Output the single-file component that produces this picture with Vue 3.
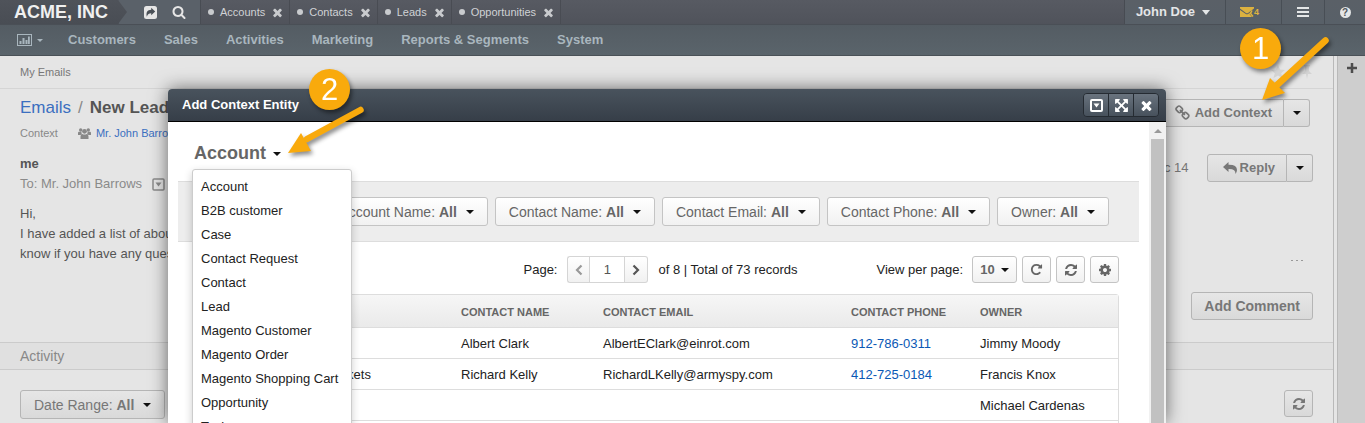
<script setup>
import { ref } from 'vue'

const tabs = ['Accounts', 'Contacts', 'Leads', 'Opportunities']
const nav = ['Customers', 'Sales', 'Activities', 'Marketing', 'Reports & Segments', 'System']
const entities = [
  'Account', 'B2B customer', 'Case', 'Contact Request', 'Contact', 'Lead',
  'Magento Customer', 'Magento Order', 'Magento Shopping Cart', 'Opportunity', 'Task'
]
const filters = ['Account Name', 'Contact Name', 'Contact Email', 'Contact Phone', 'Owner']
const rows = [
  { account: '', name: 'Albert Clark', email: 'AlbertEClark@einrot.com', phone: '912-786-0311', owner: 'Jimmy Moody' },
  { account: 'Supermarkets', name: 'Richard Kelly', email: 'RichardLKelly@armyspy.com', phone: '412-725-0184', owner: 'Francis Knox' },
  { account: '', name: '', email: '', phone: '', owner: 'Michael Cardenas' },
  { account: '', name: '', email: '', phone: '', owner: '' }
]
const page = ref('1')

const icons = {
  times: 'M1490 1322q0 40-28 68l-136 136q-28 28-68 28t-68-28l-294-294-294 294q-28 28-68 28t-68-28l-136-136q-28-28-28-68t28-68l294-294-294-294q-28-28-28-68t28-68l136-136q28-28 68-28t68 28l294 294 294-294q28-28 68-28t68 28l136 136q28 28 28 68t-28 68l-294 294 294 294q28 28 28 68z',
  search: 'M1216 832q0-185-131.5-316.5t-316.5-131.5-316.5 131.5-131.5 316.5 131.5 316.5 316.5 131.5 316.5-131.5 131.5-316.5zm512 832q0 52-38 90t-90 38q-54 0-90-38l-343-342q-179 124-399 124-143 0-273.5-55.5t-225-150-150-225-55.5-273.5 55.5-273.5 150-225 225-150 273.5-55.5 273.5 55.5 225 150 150 225 55.5 273.5q0 220-124 399l343 343q37 37 37 90z',
  link: 'M1456 1216q0-40-28-68l-208-208q-28-28-68-28-42 0-72 32 3 3 19 18.5t21.5 21.5 15 19 13 25.5 3.5 27.5q0 40-28 68t-68 28q-15 0-27.5-3.5t-25.5-13-19-15-21.5-21.5-18.5-19q-33 31-33 73 0 40 28 68l206 207q27 27 68 27 40 0 68-26l147-146q28-28 28-67zm-703-705q0-40-28-68l-206-207q-28-28-68-28-39 0-68 27l-147 146q-28 28-28 67 0 40 28 68l208 208q27 27 68 27 42 0 72-31-3-3-19-18.5t-21.5-21.5-15-19-13-25.5-3.5-27.5q0-40 28-68t68-28q15 0 27.5 3.5t25.5 13 19 15 21.5 21.5 18.5 19q33-31 33-73zm895 705q0 120-85 203l-147 146q-83 83-203 83-121 0-204-85l-206-207q-83-83-83-203 0-123 88-209l-88-88q-86 88-208 88-120 0-204-84l-208-208q-84-84-84-204t85-203l147-146q83-83 203-83 121 0 204 85l206 207q83 83 83 203 0 123-88 209l88 88q86-88 208-88 120 0 204 84l208 208q84 84 84 204z',
  refresh: 'M1639 1056q0 5-1 7-64 268-268 434.5t-478 166.5q-146 0-282.5-55t-243.5-157l-129 129q-19 19-45 19t-45-19-19-45v-448q0-26 19-45t45-19h448q26 0 45 19t19 45-19 45l-137 137q71 66 161 102t187 36q134 0 250-65t186-179q11-17 53-117 8-23 30-23h192q13 0 22.5 9.5t9.5 22.5zm25-800v448q0 26-19 45t-45 19h-448q-26 0-45-19t-19-45 19-45l138-138q-148-137-349-137-134 0-250 65t-186 179q-11 17-53 117-8 23-30 23h-199q-13 0-22.5-9.5t-9.5-22.5v-7q65-268 270-434.5t480-166.5q146 0 284 55.5t245 156.5l130-129q19-19 45-19t45 19 19 45z',
  repeat: 'M1664 256v448q0 26-19 45t-45 19h-448q-42 0-59-40-17-39 14-69l138-138q-148-137-349-137-104 0-198.5 40.5t-163.5 109.5-109.5 163.5-40.5 198.5 40.5 198.5 109.5 163.5 163.5 109.5 198.5 40.5q119 0 225-52t179-147q7-10 23-12 15 0 25 9l137 138q9 8 9.5 20.5t-7.5 22.5q-109 132-264 204.5t-327 72.5q-156 0-298-61t-245-164-164-245-61-298 61-298 164-245 245-164 298-61q147 0 284.5 55.5t244.5 156.5l130-129q29-31 70-14 39 17 39 59z',
  gear: 'M1152 896q0-106-75-181t-181-75-181 75-75 181 75 181 181 75 181-75 75-181zm512-109v222q0 12-8 23t-20 13l-185 28q-19 54-39 91 35 50 107 138 10 12 10 25t-9 23q-27 37-99 108t-94 71q-12 0-26-9l-138-108q-44 23-91 38-16 136-29 186-7 28-36 28h-222q-14 0-24.5-8.5t-11.5-21.5l-28-184q-49-16-90-37l-141 107q-10 9-25 9-14 0-25-11-126-114-165-168-7-10-7-23 0-12 8-23 15-21 51-66.5t54-70.5q-27-50-41-99l-183-27q-13-2-21-12.5t-8-23.5v-222q0-12 8-23t19-13l186-28q14-46 39-92-40-57-107-138-10-12-10-24 0-10 9-23 26-36 98.5-107.5t94.5-71.5q13 0 26 10l138 107q44-23 91-38 16-136 29-186 7-28 36-28h222q14 0 24.5 8.5t11.5 21.5l28 184q49 16 90 37l142-107q9-9 24-9 13 0 25 10 129 119 165 170 7 8 7 22 0 12-8 23-15 21-51 66.5t-54 70.5q26 50 41 98l183 28q13 2 21 12.5t8 23.5z',
  expand: 'M1411 541l-355 355 355 355 144-144q29-31 70-14 39 17 39 59v448q0 26-19 45t-45 19h-448q-42 0-59-40-17-39 14-69l144-144-355-355-355 355 144 144q31 30 14 69-17 40-59 40h-448q-26 0-45-19t-19-45v-448q0-42 40-59 39-17 69 14l144 144 355-355-355-355-144 144q-19 19-45 19-12 0-24-5-40-17-40-59v-448q0-26 19-45t45-19h448q42 0 59 40 17 39-14 69l-144 144 355 355 355-355-144-144q-31-30-14-69 17-40 59-40h448q26 0 45 19t19 45v448q0 42-39 59-13 5-25 5-26 0-45-19z'
}
</script>

<template>
  <div class="app">
    <header class="topbar">
      <a class="logo" href="#">ACME, INC</a>
      <div class="tools">
        <button class="bare" aria-label="Share">
          <svg width="13" height="13" viewBox="0 0 13 13">
            <rect x="0" y="0" width="13" height="13" rx="2.500" fill="currentColor" />
            <path d="M7.200 1.800v2C3.500 4 1.800 6 2.800 10.800 3.800 8.200 5 7.300 7.200 7.300v2l4-3.700z" fill="#4a5057" />
          </svg>
        </button>
        <button class="bare" aria-label="Search">
          <svg width="14" height="14" viewBox="0 0 1792 1792"><path :d="icons.search" fill="currentColor" /></svg>
        </button>
      </div>
      <div class="tabs">
        <div v-for="t in tabs" :key="t" class="tab">
          <i class="dot"></i><a href="#">{{ t }}</a>
          <button class="bare" :aria-label="'Close ' + t">
            <svg width="13" height="13" viewBox="0 0 1792 1792"><path :d="icons.times" fill="currentColor" /></svg>
          </button>
        </div>
      </div>
      <div class="user">
        <button class="bare name">John Doe <i class="caret big"></i></button>
        <button class="bare mail" aria-label="Mail">
          <svg width="19" height="12" viewBox="0 0 19 12">
            <path d="M0 2.500 6 7q1 .6 2 0l6-4.500V1H0z M0 4v7h12L9.500 8 11 5.800 8.500 7.800q-1.500 1-3 0z" fill="#dcb13f" />
            <path d="M12 4.500 10.500 7.500 13 10.500" fill="none" stroke="#dcb13f" stroke-width="1.500" />
          </svg><span>4</span>
        </button>
        <button class="bare menu" aria-label="Menu"><i></i><i></i><i></i></button>
        <button class="bare help" aria-label="Help"><span>?</span></button>
      </div>
    </header>

    <nav class="mainnav">
      <button class="bare dash" aria-label="Dashboards">
        <svg width="15" height="12" viewBox="0 0 15 12">
          <rect x=".5" y=".5" width="14" height="11" fill="none" stroke="currentColor" />
          <path d="M2.500 7h2v3h-2zM5.500 4h2v6h-2zM8.500 6h2v4h-2zM11 2.500h1.800V10H11z" fill="currentColor" />
        </svg>
        <i class="caret small"></i>
      </button>
      <a v-for="n in nav" :key="n" href="#">{{ n }}</a>
    </nav>

    <div class="page">
      <main class="main">
        <div class="crumbs">
          <span>My Emails</span>
          <span class="pins">
            <svg width="14" height="13" viewBox="0 0 14 13"><path d="M7 0l2 4.500 5 .5-3.800 3.200L11.500 13 7 10.500 2.500 13l1.300-4.800L0 5l5-.5z" fill="currentColor" /></svg>
            <svg width="12" height="14" viewBox="0 0 12 14"><path d="M3 0h6v1L8 2v4l3 3H7l-1 5-1-5H1l3-3V2L3 1z" fill="currentColor" /></svg>
          </span>
        </div>

        <div class="row head">
          <div>
            <h1><a href="#">Emails</a><span>/</span>New Lead</h1>
            <p class="context">
              <span>Context</span>
              <svg width="13" height="11" viewBox="0 0 13 11" fill="currentColor">
                <circle cx="2.700" cy="2" r="1.700" /><circle cx="10.300" cy="2" r="1.700" /><circle cx="6.500" cy="3.300" r="2.400" />
                <path d="M0 7V5q0-1.200 1-1.200h2.400Q3.300 5.500 4 6 2.800 6.300 2.500 7zM13 7V5q0-1.200-1-1.200H9.600Q9.700 5.500 9 6q1.200.3 1.500 1zM2.500 11V8.500q0-2.500 1.800-2.500 2.200 1.200 4.400 0 1.800 0 1.800 2.500V11z" />
              </svg>
              <a href="#">Mr. John Barrows</a>
            </p>
          </div>
          <div class="group context-group">
            <button class="btn bold"><svg width="16" height="16" viewBox="0 0 1792 1792"><path :d="icons.link" fill="currentColor" /></svg>Add Context</button>
            <button class="btn split" aria-label="More context actions"><i class="caret"></i></button>
          </div>
        </div>

        <div class="row message">
          <div>
            <strong>me</strong>
            <p class="to">To: Mr. John Barrows
              <svg width="13" height="13" viewBox="0 0 13 13"><rect x="1" y="1" width="11" height="11" rx="1" fill="none" stroke="currentColor" stroke-width="1.500" /><path d="M3.500 4.500h6l-3 4z" fill="currentColor" /></svg>
            </p>
          </div>
          <div class="reply">
            <time>Dec 14</time>
            <div class="group">
              <button class="btn bold"><svg width="14" height="12" viewBox="0 0 14 12"><path d="M5.500 0v2.700Q14 2.500 14 8q0 2-1.600 4Q13 6.800 5.500 7v3L0 5z" fill="currentColor" /></svg>Reply</button>
              <button class="btn split" aria-label="More reply actions"><i class="caret"></i></button>
            </div>
          </div>
        </div>

        <div class="row text">
          <p>Hi,<br>I have added a list of about<br>know if you have any questions</p>
          <span class="dots"><i></i><i></i><i></i></span>
        </div>

        <div class="row comment"><button class="btn large">Add Comment</button></div>
        <h2 class="activity">Activity</h2>
        <div class="row range">
          <button class="btn filter">Date Range: <b>All</b><i class="caret"></i></button>
          <button class="btn square" aria-label="Refresh"><svg width="14" height="14" viewBox="0 0 1792 1792"><path :d="icons.refresh" fill="currentColor" /></svg></button>
        </div>
      </main>
      <aside class="rail">
        <button class="bare" aria-label="Add widget"><svg width="10" height="10" viewBox="0 0 10 10"><path d="M5 0v10M0 5h10" stroke="currentColor" stroke-width="2.500" /></svg></button>
      </aside>
    </div>

    <section class="dialog" role="dialog" aria-label="Add Context Entity">
      <div class="dialog-head">
        <span>Add Context Entity</span>
        <div class="wins">
          <button aria-label="Minimize"><svg width="13" height="13" viewBox="0 0 13 13"><rect x="1" y="1" width="11" height="11" rx="1" fill="none" stroke="#fff" stroke-width="2" /><path d="M3.500 4.500h6l-3 4z" fill="#fff" /></svg></button>
          <button aria-label="Maximize"><svg width="15" height="15" viewBox="0 0 1792 1792"><path :d="icons.expand" fill="#fff" /></svg></button>
          <button aria-label="Close"><svg width="15" height="15" viewBox="0 0 1792 1792"><path :d="icons.times" fill="#fff" /></svg></button>
        </div>
      </div>
      <div class="dialog-body">
        <div class="content">
          <div class="picker">
            <button class="bare title">Account<i class="caret"></i></button>
            <ul class="options">
              <li v-for="e in entities" :key="e"><a href="#">{{ e }}</a></li>
            </ul>
          </div>
          <div class="filters">
            <button v-for="f in filters" :key="f" class="btn filter">{{ f }}: <b>All</b><i class="caret"></i></button>
          </div>
          <div class="paging">
            <div class="pager">
              <label for="page">Page:</label>
              <div class="group pages">
                <button class="btn off" aria-label="Previous page"><svg width="8" height="12" viewBox="0 0 8 12"><path d="M6.500 1.500 2 6l4.500 4.500" fill="none" stroke="currentColor" stroke-width="2.200" /></svg></button>
                <input id="page" v-model="page">
                <button class="btn" aria-label="Next page"><svg width="8" height="12" viewBox="0 0 8 12"><path d="M1.500 1.500 6 6l-4.500 4.500" fill="none" stroke="currentColor" stroke-width="2.200" /></svg></button>
              </div>
              <span>of 8 | Total of 73 records</span>
            </div>
            <div class="view">
              <span>View per page:</span>
              <button class="btn size">10<i class="caret"></i></button>
              <button class="btn square" aria-label="Reset"><svg width="13" height="13" viewBox="0 0 1792 1792"><path :d="icons.repeat" fill="currentColor" /></svg></button>
              <button class="btn square" aria-label="Refresh"><svg width="14" height="14" viewBox="0 0 1792 1792"><path :d="icons.refresh" fill="currentColor" /></svg></button>
              <button class="btn square" aria-label="Settings"><svg width="14" height="14" viewBox="0 0 1792 1792"><path :d="icons.gear" fill="currentColor" /></svg></button>
            </div>
          </div>
          <table>
            <colgroup><col class="c1"><col class="c2"><col class="c3"><col class="c4"><col></colgroup>
            <thead>
              <tr><th></th><th>CONTACT NAME</th><th>CONTACT EMAIL</th><th>CONTACT PHONE</th><th>OWNER</th></tr>
            </thead>
            <tbody>
              <tr v-for="(r, i) in rows" :key="i">
                <td class="account">{{ r.account }}</td><td>{{ r.name }}</td><td>{{ r.email }}</td>
                <td><a v-if="r.phone" href="#">{{ r.phone }}</a></td><td>{{ r.owner }}</td>
              </tr>
            </tbody>
          </table>
        </div>
        <div class="scroll"><i class="up"></i><div class="thumb"></div></div>
      </div>
    </section>

    <svg class="note two" width="100" height="110" viewBox="0 0 100 110">
      <circle cx="49.500" cy="29.500" r="20.500" fill="#f9aa0c" />
      <text x="49.500" y="40" text-anchor="middle">2</text>
      <path d="M80.500 50 27 79" stroke="#f9aa0c" stroke-width="6.500" stroke-linecap="round" />
      <path d="M8 93 21 73l10 18z" fill="#f9aa0c" />
    </svg>
    <svg class="note one" width="110" height="95" viewBox="0 0 110 95">
      <circle cx="30.500" cy="28.500" r="20.500" fill="#f9aa0c" />
      <text x="30.500" y="39" text-anchor="middle">1</text>
      <path d="M95.500 20.500 47 65" stroke="#f9aa0c" stroke-width="6.500" stroke-linecap="round" />
      <path d="M32 80 40 58l15 15z" fill="#f9aa0c" />
    </svg>
  </div>
</template>

<style>
body { margin: 0; overflow: hidden; }
</style>

<style scoped>
* { box-sizing: border-box; }
.app { position: relative; display: flex; flex-direction: column; height: 100vh; overflow: hidden; font: 13px/18px "Liberation Sans", Arial, sans-serif; color: #555; background: #e5e5e5; }
a { text-decoration: none; color: #3b6fc0; }
p, h1, h2, ul { margin: 0; padding: 0; }
svg { flex: none; display: block; }
button { font: inherit; color: inherit; margin: 0; white-space: nowrap; }
.bare { border: 0; background: none; padding: 0; display: flex; align-items: center; }
.caret { display: inline-block; flex: none; border: 4px solid transparent; border-top-color: #111; border-bottom: 0; }
.caret.big { border-width: 5px 4px 0; border-top-color: #e4e6e7; margin-left: 7px; }
.caret.small { border-width: 3px 3px 0; border-top-color: #a9b6be; margin-left: 5px; }

.topbar { display: flex; flex: none; height: 25px; background: linear-gradient(#575a62, #50535b); border-bottom: 1px solid #4a4f56; }
.logo { width: 128px; padding-left: 14px; background: linear-gradient(#4f535a, #494d54); color: #f0f0f0; font-weight: bold; font-size: 18px; line-height: 24px; clip-path: polygon(0 0, 118px 0, 127px 12px, 118px 24px, 0 24px); white-space: nowrap; }
.tools { display: flex; gap: 15px; width: 82px; padding-left: 25px; margin-left: -9px; background: #5a6169; border-right: 1px solid #484c53; color: #e6e6e6; }
.tabs { display: flex; flex: 1; color: #c9cbce; font-size: 11px; }
.tab { display: flex; align-items: center; padding: 0 5px 0 7px; border-right: 1px solid #494c53; }
.tab a { color: #d0d2d5; margin: 0 6px; }
.dot { width: 6px; height: 6px; border-radius: 50%; background: #c9cbce; }
.user { display: flex; background: linear-gradient(#5a6067, #586068); border-left: 1px solid #474b52; color: #e4e6e7; }
.user button { justify-content: center; border-right: 1px solid #484e55; }
.name { width: 101px; font-weight: bold; padding-right: 4px; }
.mail { width: 56px; padding-right: 8px; color: #dcb13f; font-size: 9px; font-weight: bold; }
.mail svg { margin-right: -5px; }
.user .menu { width: 43px; flex-direction: column; gap: 2px; }
.menu i { width: 12px; height: 2px; background: #e4e6e7; }
.user .help { width: 40px; border-right: 0; }
.help span { width: 11px; height: 11px; line-height: 11px; border-radius: 50%; background: #e4e6e7; color: #50565d; font-weight: bold; font-size: 10px; text-align: center; }

.mainnav { display: flex; flex: none; gap: 28px; height: 31px; align-items: center; padding: 0 17px; background: linear-gradient(#545c63, #5a646b); border-bottom: 1px solid #4a5157; font-weight: bold; }
.mainnav a { color: #a9b6be; line-height: 30px; white-space: nowrap; }
.dash { color: #a9b6be; margin-right: -3px; }

.page { display: flex; flex: 1; }
.main { flex: 1; min-width: 0; border-right: 1px solid #b9b9b9; }
.rail { width: 28px; margin-left: 3px; border-left: 1px solid #b9b9b9; background: #cecece; padding: 7px 0 0 9px; color: #4d4d4d; }
.crumbs { display: flex; justify-content: space-between; align-items: center; height: 33px; padding: 0 20px; border-bottom: 1px solid #d5d5d5; font-size: 11px; color: #777; }
.pins { display: flex; gap: 16px; color: #d3d3d3; }
.row { display: flex; justify-content: space-between; align-items: flex-start; padding: 0 20px; }
h1 { margin-top: 8px; font-size: 17px; line-height: 22px; color: #555; white-space: nowrap; }
h1 a, h1 span { font-weight: normal; }
h1 span { margin: 0 7px; color: #888; }
.context { display: flex; align-items: center; margin-top: 5px; font-size: 11px; color: #888; white-space: nowrap; }
.context svg { margin: 0 5px 0 20px; }
.btn { display: flex; align-items: center; justify-content: center; height: 28px; padding: 0; border: 1px solid #b5b5b5; border-radius: 3px; background: linear-gradient(#e6e6e6, #d9d9d9); color: #777; }
.bold, .large { font-weight: bold; }
.group { display: flex; }
.group .btn:first-child { border-radius: 3px 0 0 3px; }
.group .btn:last-child { border-radius: 0 3px 3px 0; border-left: 0; }
.group .bold { padding: 0 11px 0 13px; }
.group .bold svg { margin-right: 4px; }
.split { width: 26px; }
.context-group { margin: 10px 3px 0 0; }
.message { padding-top: 12px; }
.message strong { display: block; padding-top: 1px; }
.to { display: flex; align-items: center; gap: 10px; margin-top: 2px; color: #8a8a8a; }
.reply { display: flex; align-items: center; gap: 18px; color: #777; }
.reply .group .bold { padding: 0 11px 0 15px; }
.reply .group .bold svg { margin-right: 3px; }
.text { margin-top: 11px; line-height: 20px; white-space: nowrap; }
.dots { display: flex; gap: 3px; align-self: flex-end; padding: 0 10px 3px 0; }
.dots i { width: 2px; height: 1px; background: #999; }
.comment { margin-top: 28px; justify-content: flex-end; }
.large { padding: 0 12px; font-size: 14px; }
.activity { margin-top: 22px; padding-left: 20px; border: solid #cbcbcb; border-width: 1px 0; background: #e0e0e0; font-size: 14px; line-height: 26px; font-weight: normal; color: #888; }
.range { padding-top: 20px; }
.filter { height: 29px; padding: 0 13px; font-size: 14px; white-space: pre; }
.filter .caret { margin-left: 9px; }
.square { width: 29px; height: 27px; }

.dialog { position: absolute; top: 89px; left: 168px; right: 199px; bottom: 0; display: flex; flex-direction: column; border-radius: 4px 4px 0 0; box-shadow: 0 0 18px rgba(0, 0, 0, .55); background: #fff; color: #222; }
.dialog-head { display: flex; justify-content: space-between; flex: none; height: 33px; align-items: center; padding: 0 7px 0 14px; border-bottom: 1px solid #000; border-radius: 4px 4px 0 0; background: linear-gradient(#49535d, #363e48); color: #fff; font-weight: bold; }
.wins { display: flex; border: 1px solid #252b32; border-radius: 4px; overflow: hidden; }
.wins button { display: flex; align-items: center; justify-content: center; width: 25px; height: 22px; padding: 0; border: 0; border-right: 1px solid #252b32; background: linear-gradient(#69737e, #47515c); }
.wins button:last-child { width: 24px; border-right: 0; }
.dialog-body { display: flex; flex: 1; min-height: 0; overflow: hidden; }
.content { flex: 1; min-width: 0; padding: 0 10px; }
.picker { position: relative; margin: 18px 0 15px 16px; width: max-content; }
.title { font-size: 18px; font-weight: bold; line-height: 26px; color: #666; }
.title .caret { margin: 2px 0 0 7px; }
.options { position: absolute; z-index: 2; top: 29px; left: -2px; width: 160px; padding: 5px 8px; list-style: none; border: 1px solid #ccc; border-radius: 3px; background: #fff; box-shadow: 0 3px 8px rgba(0, 0, 0, .2); }
.options a { display: block; line-height: 24px; color: #222; white-space: nowrap; }
.filters { display: flex; justify-content: flex-end; gap: 7px; padding: 15px 30px 15px 0; border: solid #ddd; border-width: 1px 0; background: #ededed; }
.content .btn { border-color: #c4c4c4; background: linear-gradient(#fff, #f1f1f1); color: #666; }
.paging { display: grid; grid-template-columns: 1fr auto 1fr; margin: 14px 20px 11px 24px; align-items: center; }
.pager { grid-column: 2; display: flex; align-items: center; gap: 10px; }
.content .pages .btn { width: 22px; height: 27px; border-color: #d5d5d5; }
.content .pages .btn:last-child { width: 23px; border-left: 0; color: #555; }
.content .pages .btn.off { color: #999; border-right: 0; }
.pages input { width: 36px; height: 27px; padding: 0; border: 1px solid #d5d5d5; text-align: center; font: inherit; color: #555; }
.view { display: flex; align-items: center; justify-content: flex-end; gap: 5px; }
.view span { margin-right: 4px; }
.size { width: 45px; height: 27px; font-weight: bold; gap: 6px; }
table { width: calc(100% - 44px); margin-left: 24px; table-layout: fixed; border: 1px solid #ddd; border-collapse: separate; border-spacing: 0; border-radius: 3px; }
th { height: 33px; padding: 2px 8px 0; text-align: left; font-size: 11px; color: #666; background: linear-gradient(#f6f6f6, #eaeaea); border-bottom: 1px solid #ddd; }
td { height: 31px; padding: 2px 8px 0; border-bottom: 1px solid #ddd; white-space: nowrap; }
td a { color: #0a58b5; }
td.account { padding-left: 87px; }
.c1 { width: 250px; } .c2 { width: 142px; } .c3 { width: 248px; } .c4 { width: 129px; }
.scroll { flex: none; width: 17px; padding: 7px 2px 0; background: #f1f1f1; }
.up { display: block; margin: 0 auto 6px; width: 8px; border: 4px solid transparent; border-bottom-color: #999; border-top: 0; }
.thumb { height: 100%; background: #c1c1c1; }

.note { position: absolute; z-index: 5; pointer-events: none; filter: drop-shadow(2px 3px 2px rgba(0, 0, 0, .45)); }
.note text { font: 31px "Liberation Sans", Arial, sans-serif; fill: #fff; }
.two { top: 60px; left: 280px; }
.one { top: 20px; right: 25px; }
</style>
